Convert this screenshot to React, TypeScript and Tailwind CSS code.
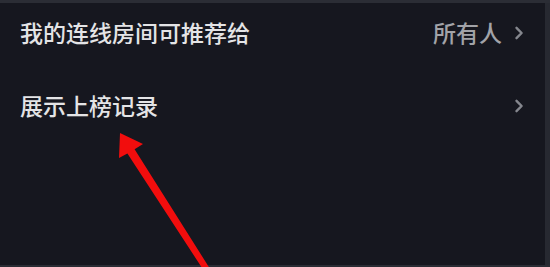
const font = "font-['Noto_Sans_CJK_SC','Noto_Sans',sans-serif]";

const Chevron = () => (
  <svg width="10" height="14" viewBox="0 0 10 14" className="shrink-0">
    <path d="M2.5 1.8 L7.6 7 L2.5 12.2" fill="none" stroke="#85878e" strokeWidth="2.4" strokeLinecap="round" strokeLinejoin="round" />
  </svg>
);

const Row = ({ label, value }: { label: string; value?: string }) => (
  <div className="flex h-[73px] items-center justify-between pl-5 pr-[21px]">
    <span className="text-[23px] font-medium leading-none text-[#e4e4e6]">{label}</span>
    <div className="flex items-center gap-[12px]">
      {value && <span className="text-[23px] font-medium leading-none text-[#a2a3a8]">{value}</span>}
      <Chevron />
    </div>
  </div>
);

export default function App() {
  return (
    <div className={`relative h-[267px] w-[550px] overflow-hidden bg-[#16171f] ${font}`}>
      <div className="h-[3px] bg-[#2b2d35]" />
      <div className="flex">
        <div className="flex-1 -mt-[7px]">
          <Row label="我的连线房间可推荐给" value="所有人" />
          <Row label="展示上榜记录" />
        </div>
        <div className="h-[264px] w-[5px] bg-[#272931]" />
      </div>
      <div className="absolute bottom-0 left-0 right-0 h-[2px] bg-[#2a2c34]" />
      {/* red annotation arrow */}
      <svg className="absolute inset-0" width="550" height="267" viewBox="0 0 550 267">
        <polygon points="120,133 143,144 134.6,149.2 212,272 206,274 127.4,153.5 119,158" fill="#f20d0d" />
      </svg>
    </div>
  );
}
